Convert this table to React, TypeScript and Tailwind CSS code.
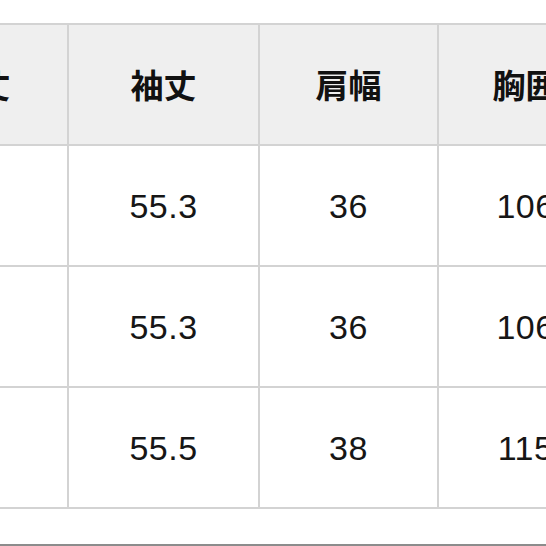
import React from "react";

const cols = [
  { w: "w-[181px]", label: "着丈" },
  { w: "w-[191px]", label: "袖丈" },
  { w: "w-[179px]", label: "肩幅" },
  { w: "w-[175px]", label: "胸囲" },
];

const rows = [
  ["", "55.3", "36", "106"],
  ["", "55.3", "36", "106"],
  ["", "55.5", "38", "115"],
];

export default function App() {
  return (
    <div className="relative w-[546px] h-[546px] overflow-hidden bg-white">
      <div className="pt-[23px] ml-[-114px] w-[800px]">
        <table className="border-collapse table-fixed w-[728px]">
          <colgroup>
            {cols.map((c, i) => (
              <col key={i} className={c.w} />
            ))}
          </colgroup>
          <thead>
            <tr className="h-[121px]">
              {cols.map((c, i) => (
                <th
                  key={i}
                  className="border-2 border-[#d3d3d3] bg-[#efefef] text-center align-middle text-[33px] font-bold text-[#111] [font-family:'Noto_Sans_CJK_JP','Noto_Sans_CJK_SC',sans-serif] leading-none"
                >
                  {c.label}
                </th>
              ))}
            </tr>
          </thead>
          <tbody>
            {rows.map((r, ri) => (
              <tr key={ri} className="h-[121px]">
                {r.map((v, ci) => (
                  <td
                    key={ci}
                    className="border-2 border-[#d3d3d3] bg-white text-center align-middle text-[34px] text-[#161616] [font-family:'Liberation_Sans',Arial,sans-serif] leading-none tracking-[0.5px]"
                  >
                    {v}
                  </td>
                ))}
              </tr>
            ))}
          </tbody>
        </table>
      </div>
      <div className="absolute left-0 right-0 bottom-0 h-[2px] bg-[#8c8c8c]" />
    </div>
  );
}
